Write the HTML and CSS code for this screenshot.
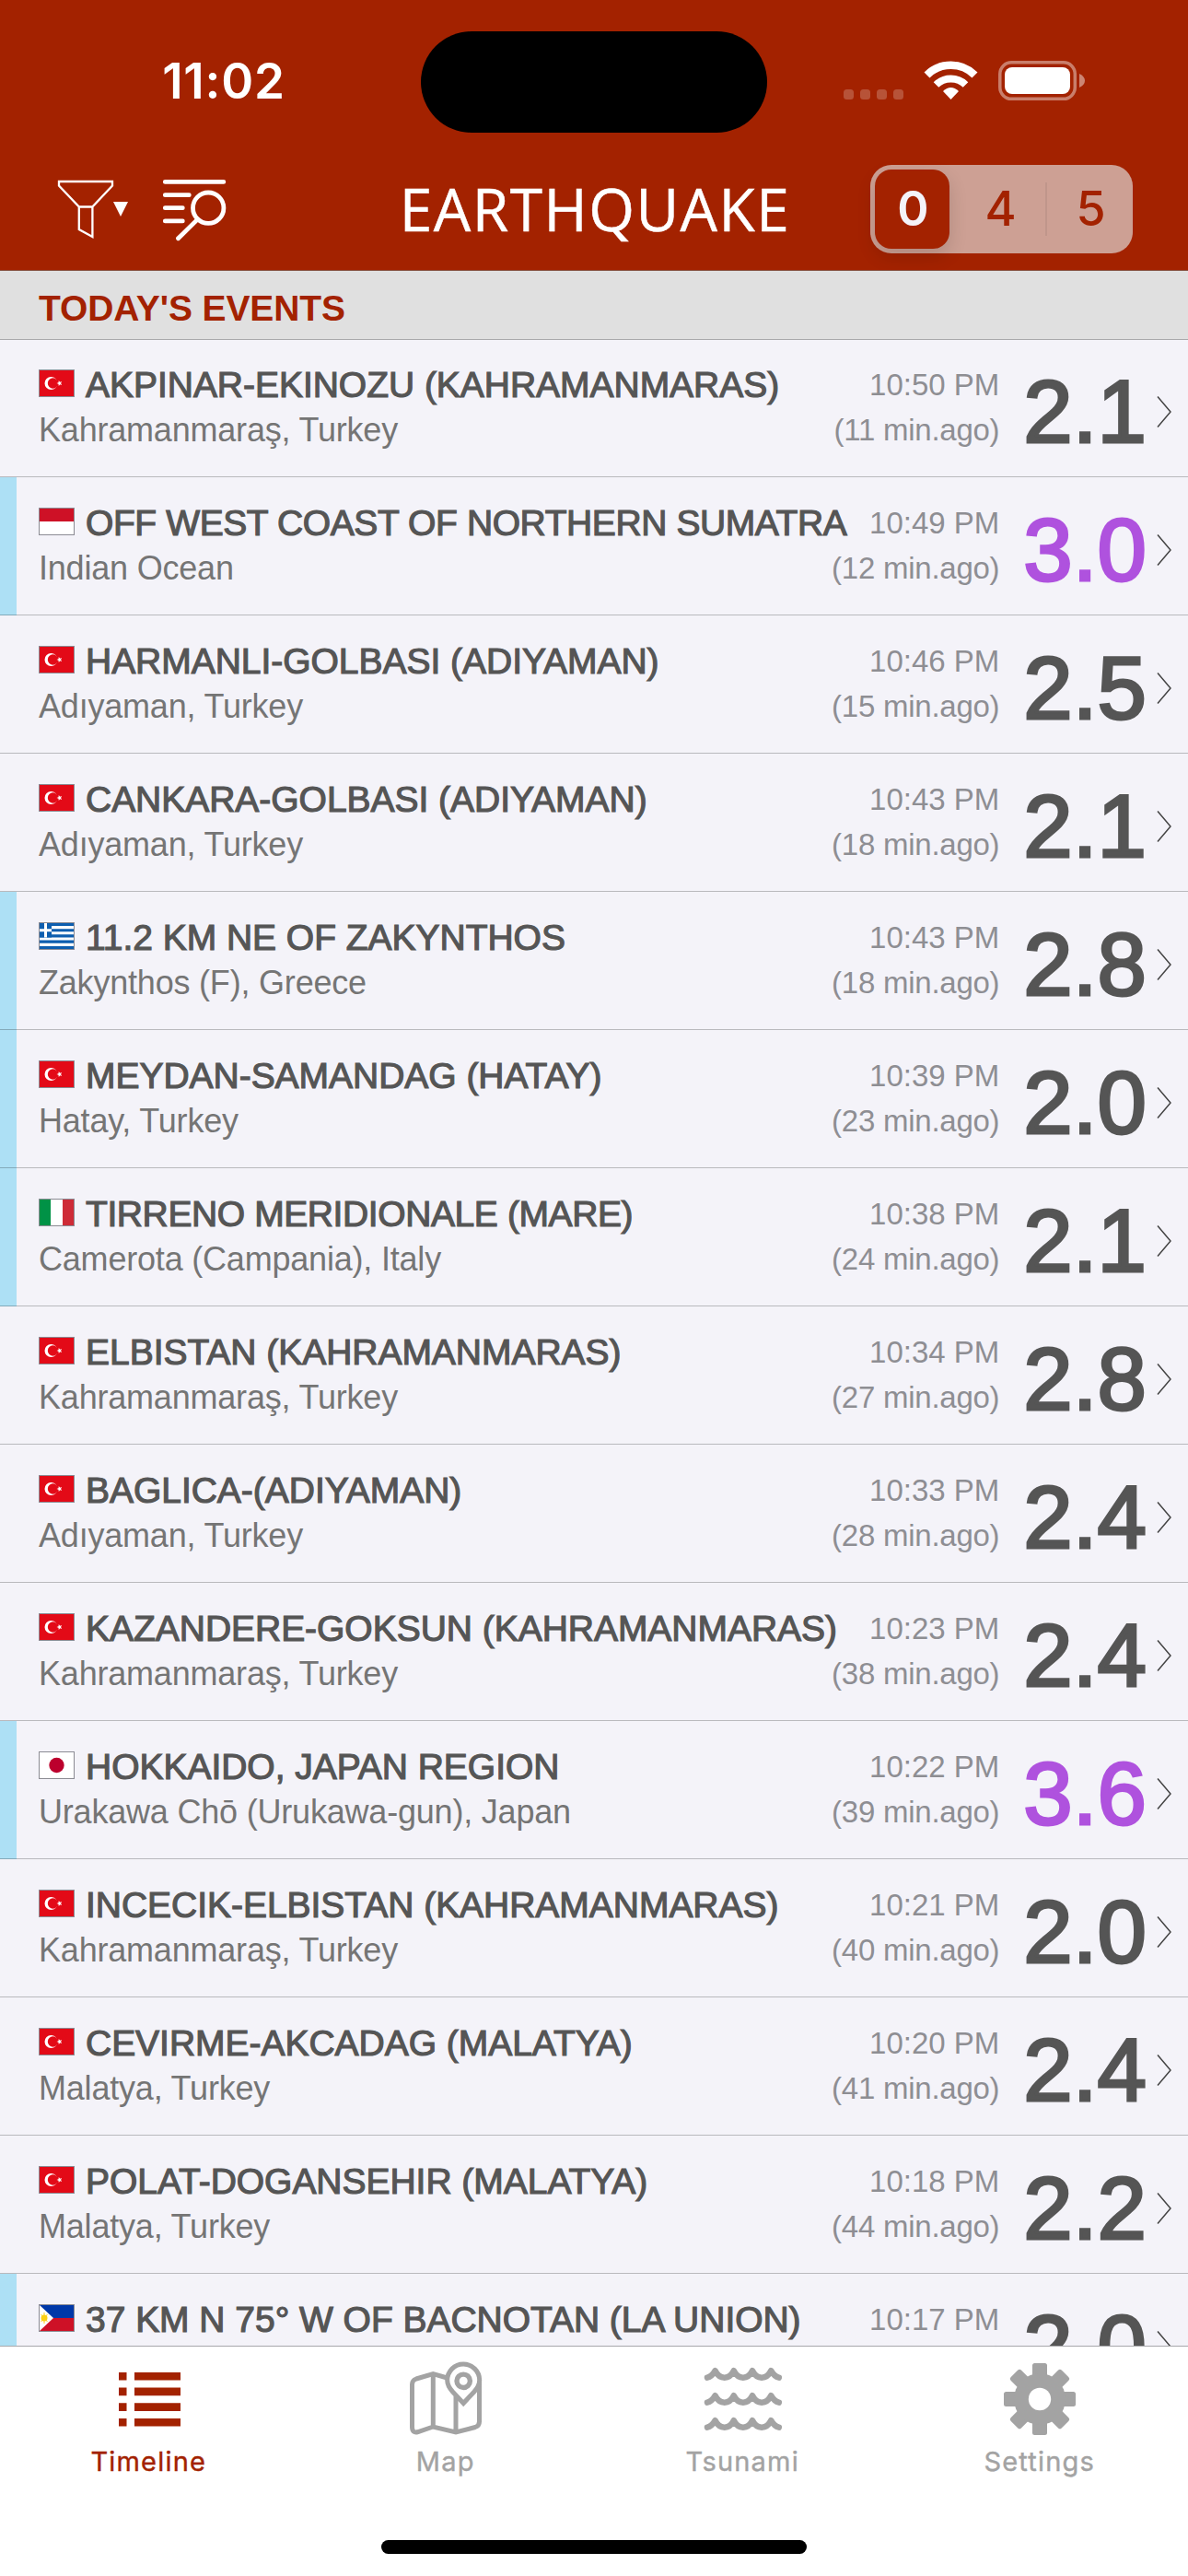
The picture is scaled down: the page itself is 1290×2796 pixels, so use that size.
FILE: index.html
```html
<!DOCTYPE html>
<html lang="en">
<head>
  <meta charset="UTF-8" />
  <meta name="viewport" content="width=device-width, initial-scale=1.0" />
  <title>Earthquake</title>
  <link rel="stylesheet" href="styles.css">
</head>
<body>
  <div class="app">
    <header class="header">
      <div class="status">
        <div class="clock">11:02</div>
        <div class="island"></div>
        <svg class="status-icons" width="264" height="46" viewBox="915 64 264 46">
          <g fill="#fff" opacity=".22">
            <rect x="916" y="96" width="11" height="11" rx="3.5"/>
            <rect x="934" y="96" width="11" height="11" rx="3.5"/>
            <rect x="952" y="96" width="11" height="11" rx="3.5"/>
            <rect x="970" y="96" width="11" height="11" rx="3.5"/>
          </g>
          <g fill="none" stroke="#fff">
            <path d="M1006.500 80.500a37 37 0 0 1 52 0" stroke-width="8.500"/>
            <path d="M1016.500 91a23 23 0 0 1 32 0" stroke-width="8"/>
          </g>
          <path d="M1032.500 107l-8.500-9q8.500-8 17 0z" fill="#fff"/>
          <rect x="1085.800" y="66.800" width="81.500" height="39.500" rx="12.500" fill="none" stroke="#fff" stroke-opacity=".42" stroke-width="3.500"/>
          <rect x="1091" y="72" width="71" height="29" rx="8" fill="#fff"/>
          <path d="M1172 79q6 3 6 7.500t-6 7.500z" fill="#fff" opacity=".45"/>
        </svg>
      </div>
      <div class="nav">
        <div class="nav-left">
          <svg width="78" height="66" viewBox="62 195 78 66">
            <path d="M64 198h58v4.500l-21.600 23v32.500l-14.600-8v-24.500l-21.800-23zM85.800 225.500h14.600" fill="none" stroke="#fff" stroke-width="2.300"/>
            <path d="M123 220h16l-8 16z" fill="#fff"/>
          </svg>
          <svg width="70" height="68" viewBox="175.500 194 70 68" fill="none" stroke="#fff" stroke-width="4.800" stroke-linecap="round">
            <path d="M178.800 197.400h63.500M178.800 211.700h26M178.800 225.700h19M178.800 239.900h19M213.500 238.600l-20.500 20.200"/>
            <circle cx="225.700" cy="225.700" r="16.700"/>
          </svg>
        </div>
        <h1>EARTHQUAKE</h1>
        <div class="segments">
          <button class="active">0</button>
          <button>4</button>
          <button>5</button>
        </div>
      </div>
    </header>

    <h2 class="section">TODAY'S EVENTS</h2>
    <div class="list" id="list"></div>

    <nav class="tabs">
      <a class="tab active">
        <svg width="80" height="82" viewBox="121 2563 80 82" fill="currentColor">
          <path d="M129 2575h8.500v8.600h-8.500zM146 2575h50v8.600h-50zM129 2591.600h8.500v8.600h-8.500zM146 2591.600h50v8.600h-50zM129 2608.300h8.500v8.600h-8.500zM146 2608.300h50v8.600h-50zM129 2625h8.500v8.600h-8.500zM146 2625h50v8.600h-50z"/>
        </svg>
        <span>Timeline</span>
      </a>
      <a class="tab">
        <svg width="80" height="82" viewBox="443.500 2563 80 82" fill="none" stroke="currentColor" stroke-width="5">
          <path d="M485 2581l-15.200-4.500-18.300 5.500q-4.500 1.500-4.500 6v46q0 7.500 6.500 5.500l16.300-5.500 24.700 6 21-5.500q4.500-1.500 4.500-6v-44M469.800 2576.500v57.500M494.500 2601v39"/>
          <path d="M502.700 2608.500l-11.700-12.500q-5.800-6.500-5.800-12.500a17.500 17.500 0 0 1 35 0q0 6-5.800 12.500z"/>
          <circle cx="502.700" cy="2584.300" r="7.200" stroke-width="5.400"/>
        </svg>
        <span>Map</span>
      </a>
      <a class="tab">
        <svg width="90" height="82" viewBox="761 2563 90 82" fill="none" stroke="currentColor" stroke-width="6.500" stroke-linecap="round" stroke-linejoin="round">
          <path id="wave" d="M768 2580.700q5-1.200 8.600-7.500q3.600 7.500 10.100 7.500t10.100-7.500q3.600 7.500 10.100 7.500t10.100-7.500q3.600 7.500 10.100 7.500t10.100-7.500q3.600 6.300 8.600 7.500"/>
          <use href="#wave" y="27"/>
          <use href="#wave" y="54"/>
        </svg>
        <span>Tsunami</span>
      </a>
      <a class="tab">
        <svg width="80" height="82" viewBox="-40 -41 80 82" fill="currentColor">
          <g id="teeth">
            <rect x="-8" y="-39" width="16" height="78" rx="2.500"/>
            <rect x="-39" y="-8" width="78" height="16" rx="2.500"/>
          </g>
          <use href="#teeth" transform="rotate(45)"/>
          <circle r="28"/>
          <circle r="12.200" fill="#fff"/>
        </svg>
        <span>Settings</span>
      </a>
    </nav>
    <div class="home"><div class="home-bar"></div></div>
  </div>

  <script>
    // inner drawing of each flag, 37x28
    const flags = {
      tr: `<rect width="37" height="28" fill="#e30a17"/><circle cx="12.500" cy="14" r="7" fill="#fff"/><circle cx="14.500" cy="14" r="5.700" fill="#e30a17"/><path d="M18.500 14l2-.8.300-2.300 1.300 1.800 2-.6-1 1.900 1 1.900-2-.6-1.300 1.800-.300-2.300z" fill="#fff"/>`,
      id: `<rect width="37" height="14" fill="#ce1126"/><rect y="14" width="37" height="14" fill="#fff"/>`,
      gr: `<rect width="37" height="28" fill="#fff"/><path d="M0 1.500h37M0 7.700h37M0 13.900h37M0 20.100h37M0 26.500h37" stroke="#0d5eaf" stroke-width="3.100"/><rect width="13" height="15.500" fill="#0d5eaf"/><path d="M6.500 0v15.500M0 7.700h13" stroke="#fff" stroke-width="3"/>`,
      it: `<rect width="12" height="28" fill="#009246"/><rect x="12" width="13" height="28" fill="#fff"/><rect x="25" width="12" height="28" fill="#ce2b37"/>`,
      jp: `<rect width="37" height="28" fill="#fff"/><circle cx="18.500" cy="14" r="8.200" fill="#bc002d"/>`,
      ph: `<rect width="37" height="14" fill="#0038a8"/><rect y="14" width="37" height="14" fill="#ce1126"/><path d="M0 0l15 14-15 14z" fill="#fff"/><circle cx="5" cy="14" r="3.500" fill="#fcd116"/><path d="M5 8v12M1.500 10l7 8M8.500 10l-7 8" stroke="#fcd116"/>`
    };

    // flag, title, place, time, minutes ago, magnitude, at sea
    const events = [
      ["tr", "AKPINAR-EKINOZU (KAHRAMANMARAS)", "Kahramanmaraş, Turkey", "10:50", 11, "2.1", false],
      ["id", "OFF WEST COAST OF NORTHERN SUMATRA", "Indian Ocean", "10:49", 12, "3.0", true],
      ["tr", "HARMANLI-GOLBASI (ADIYAMAN)", "Adıyaman, Turkey", "10:46", 15, "2.5", false],
      ["tr", "CANKARA-GOLBASI (ADIYAMAN)", "Adıyaman, Turkey", "10:43", 18, "2.1", false],
      ["gr", "11.2 KM NE OF ZAKYNTHOS", "Zakynthos (F), Greece", "10:43", 18, "2.8", true],
      ["tr", "MEYDAN-SAMANDAG (HATAY)", "Hatay, Turkey", "10:39", 23, "2.0", true],
      ["it", "TIRRENO MERIDIONALE (MARE)", "Camerota (Campania), Italy", "10:38", 24, "2.1", true],
      ["tr", "ELBISTAN (KAHRAMANMARAS)", "Kahramanmaraş, Turkey", "10:34", 27, "2.8", false],
      ["tr", "BAGLICA-(ADIYAMAN)", "Adıyaman, Turkey", "10:33", 28, "2.4", false],
      ["tr", "KAZANDERE-GOKSUN (KAHRAMANMARAS)", "Kahramanmaraş, Turkey", "10:23", 38, "2.4", false],
      ["jp", "HOKKAIDO, JAPAN REGION", "Urakawa Chō (Urukawa-gun), Japan", "10:22", 39, "3.6", true],
      ["tr", "INCECIK-ELBISTAN (KAHRAMANMARAS)", "Kahramanmaraş, Turkey", "10:21", 40, "2.0", false],
      ["tr", "CEVIRME-AKCADAG (MALATYA)", "Malatya, Turkey", "10:20", 41, "2.4", false],
      ["tr", "POLAT-DOGANSEHIR (MALATYA)", "Malatya, Turkey", "10:18", 44, "2.2", false],
      ["ph", "37 KM N 75° W OF BACNOTAN (LA UNION)", "", "10:17", null, "2.0", true]
    ];

    document.getElementById("list").innerHTML = events.map(([flag, title, place, time, ago, mag, sea]) => `
      <div class="row ${flag} ${sea ? "sea" : ""}">
        <div class="info">
          <div class="line">
            <svg class="flag" width="37" height="28" viewBox="0 0 37 28">${flags[flag]}</svg>
            <span class="title">${title}</span>
            <span class="time">${time} PM</span>
          </div>
          <div class="line">
            <span class="place">${place}</span>
            <span class="time ago">${ago ? `(${ago} min.ago)` : ""}</span>
          </div>
        </div>
        <div class="mag ${parseFloat(mag) >= 3 ? "strong" : ""}">${mag}</div>
        <svg class="chevron" width="17" height="36" viewBox="0 0 17 36"><path d="M1 1.500l14 16.500-14 16.500" fill="none" stroke="#444" stroke-width="1.500"/></svg>
      </div>
    `).join("");
  </script>
</body>
</html>
```
FILE: styles.css
```css
:root {
  --primary: #a32200;
  --bg: #f4f3f9;
  --text: #555555;
  --muted: #8e8e93;
  --sea: #ade0f5;
}

* {
  box-sizing: border-box;
}

body {
  margin: 0;
  font-family: "Liberation Sans", Arial, sans-serif;
  background-color: #fff;
  color: var(--text);
}

svg {
  display: block;
  flex: none;
}

.app {
  width: 1290px;
  height: 2796px;
  display: flex;
  flex-direction: column;
  overflow: hidden;
}

.header {
  height: 294px;
  flex: none;
  padding-top: 34px;
  background-color: var(--primary);
  border-bottom: 1px solid #85503f;
  color: #fff;
}

.status {
  display: grid;
  grid-template-columns: 457px 376px 457px;
  align-items: center;
  height: 110px;
}

.clock {
  padding: 0 0 2px 29px;
  text-align: center;
  font: 600 53px/64px Inter, sans-serif;
  letter-spacing: 0.8px;
}

.island {
  height: 110px;
  border-radius: 55px;
  background-color: #000;
}

.status-icons {
  margin-left: 82px;
  margin-bottom: 3px;
}

.nav {
  display: grid;
  grid-template-columns: 1fr auto 1fr;
  align-items: center;
  height: 138px;
  margin-top: 14px;
  padding: 0 60px 0 62px;
}

.nav-left {
  display: flex;
  gap: 36px;
  padding-top: 2px;
}

h1 {
  margin: 0;
  font: 400 64px/80px "Open Sans", sans-serif;
  letter-spacing: 1.5px;
  -webkit-text-stroke: 0.5px;
}

.segments {
  display: flex;
  justify-self: end;
  width: 285px;
  height: 96px;
  padding: 5px 0 5px 5px;
  border-radius: 23px;
  background-color: #cda094;
}

.segments button {
  flex: 1;
  padding: 0 0 0 7px;
  border: none;
  background: none;
  color: var(--primary);
  font: 500 52px/60px Inter, sans-serif;
}

.segments .active {
  flex: 0 0 81px;
  padding: 0 0 0 2px;
  border-radius: 18px;
  background-color: var(--primary);
  color: var(--bg);
  font-weight: 600;
  box-shadow: 0 8px 20px rgba(0, 0, 0, 0.14);
}

.segments button:last-child {
  flex: 0 0 95px;
  padding-left: 4px;
  background: linear-gradient(#c0968b, #c0968b) left center / 2px 58px no-repeat;
}

.section {
  height: 74px;
  flex: none;
  margin: 0;
  padding: 19px 42px 0;
  background-color: #e0e0e0;
  color: var(--primary);
  font-size: 39px;
  line-height: 44px;
  letter-spacing: -0.1px;
}

.list {
  flex: 1;
  min-height: 0;
  overflow: hidden;
  background-color: var(--bg);
}

.row {
  display: flex;
  height: 150px;
  padding: 28px 17px 0 42px;
  border-bottom: 1px solid rgba(0, 0, 0, 0.24);
}

.row:first-child {
  box-shadow: inset 0 1px #a9a9ab;
}

.row.sea {
  background: linear-gradient(var(--sea), var(--sea)) 0 0 / 18px 100% no-repeat border-box;
}

.info {
  width: 1046px;
}

.line {
  display: flex;
  height: 49px;
  line-height: 44px;
  white-space: nowrap;
}

.flag {
  width: 39px;
  height: 30px;
  margin: 5px 12px 0 0;
  border: 1.5px solid #8b8b93;
}

.title {
  font-size: 39px;
  letter-spacing: -0.03px;
  -webkit-text-stroke: 1.2px;
}

.row.id .title {
  letter-spacing: -0.4px;
}

.row.it .title {
  letter-spacing: -0.4px;
}

.place {
  font-size: 36px;
  letter-spacing: -0.2px;
  color: #757575;
}

.time {
  margin-left: auto;
  font-size: 33px;
  color: var(--muted);
}

.ago {
  letter-spacing: -0.25px;
  line-height: 43px;
}

.mag {
  width: 145px;
  margin-top: 3px;
  margin-left: 26px;
  font-size: 96px;
  line-height: 96px;
  -webkit-text-stroke: 3px;
}

.mag.strong {
  color: #af52de;
}

.chevron {
  margin-top: 33px;
}

.tabs {
  display: grid;
  grid-template-columns: repeat(4, 1fr);
  flex: none;
  height: 160px;
  border-top: 1px solid #a8a8ac;
  background-color: #fff;
}

.tab {
  display: flex;
  flex-direction: column;
  align-items: center;
  padding-top: 16px;
  color: #a3a3a3;
  font: 400 29px/36px Inter, sans-serif;
  letter-spacing: 1.2px;
  -webkit-text-stroke: 0.4px;
}

.tab.active {
  color: var(--primary);
}

.tab span {
  margin-top: 9px;
}

.home {
  display: flex;
  justify-content: center;
  flex: none;
  height: 90px;
  padding-top: 51px;
}

.home-bar {
  width: 462px;
  height: 15px;
  border-radius: 8px;
  background-color: #000;
}
```
